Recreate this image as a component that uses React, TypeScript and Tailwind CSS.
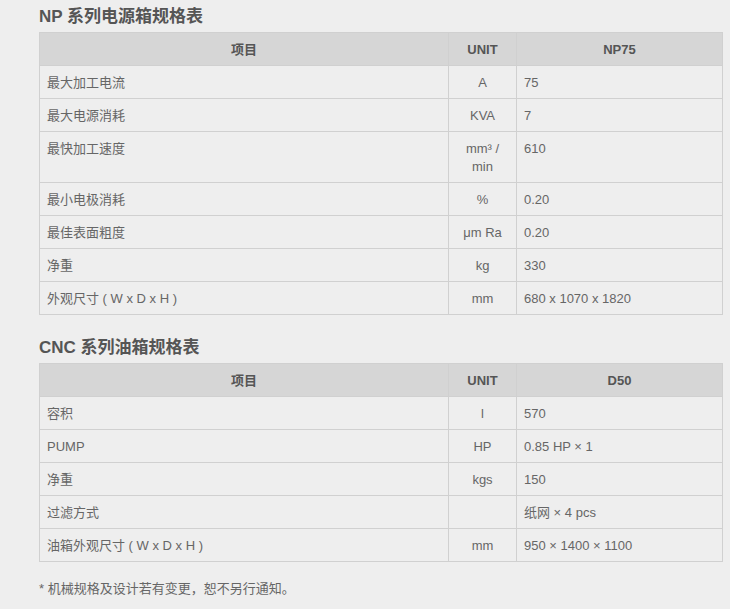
import React from 'react';

type Row = { item: string; unit: React.ReactNode; value: string };

const NP_ROWS: Row[] = [
  { item: '最大加工电流', unit: 'A', value: '75' },
  { item: '最大电源消耗', unit: 'KVA', value: '7' },
  { item: '最快加工速度', unit: <>mm³ /<br />min</>, value: '610' },
  { item: '最小电极消耗', unit: '%', value: '0.20' },
  { item: '最佳表面粗度', unit: 'μm Ra', value: '0.20' },
  { item: '净重', unit: 'kg', value: '330' },
  { item: '外观尺寸 ( W x D x H )', unit: 'mm', value: '680 x 1070 x 1820' },
];

const CNC_ROWS: Row[] = [
  { item: '容积', unit: 'l', value: '570' },
  { item: 'PUMP', unit: 'HP', value: '0.85 HP × 1' },
  { item: '净重', unit: 'kgs', value: '150' },
  { item: '过滤方式', unit: '', value: '纸网 × 4 pcs' },
  { item: '油箱外观尺寸 ( W x D x H )', unit: 'mm', value: '950 × 1400 × 1100' },
];

const thClass = 'border border-[#d0d0d0] bg-[#d6d6d6] pt-[8px] pb-[6px] leading-[18px] font-bold text-center text-[#555]';
const tdClass = 'border border-[#d0d0d0] pt-[8px] pb-[6px] px-[7px] leading-[18px] align-top';

const SpecTable: React.FC<{ model: string; rows: Row[] }> = ({ model, rows }) => (
  <table className="table-fixed border-collapse w-[684px] text-[13px]">
    <colgroup>
      <col className="w-[409px]" />
      <col className="w-[68px]" />
      <col />
    </colgroup>
    <thead>
      <tr>
        <th className={thClass}>项目</th>
        <th className={thClass}>UNIT</th>
        <th className={thClass}>{model}</th>
      </tr>
    </thead>
    <tbody>
      {rows.map((row, i) => (
        <tr key={i}>
          <td className={tdClass}>{row.item}</td>
          <td className={tdClass + ' text-center'}>{row.unit}</td>
          <td className={tdClass}>{row.value}</td>
        </tr>
      ))}
    </tbody>
  </table>
);

export default function App() {
  return (
    <div
      className="min-h-screen bg-[#eeeeee] pl-[39px] pt-[5px] text-[#666]"
      style={{ fontFamily: '"Liberation Sans", "Noto Sans CJK SC", sans-serif' }}
    >
      <h2 className="text-[17px] font-bold leading-6 mb-[3px] text-[#555]">NP 系列电源箱规格表</h2>
      <SpecTable model="NP75" rows={NP_ROWS} />

      <h2 className="text-[17px] font-bold leading-6 mt-[21px] mb-[3px] text-[#555]">CNC 系列油箱规格表</h2>
      <SpecTable model="D50" rows={CNC_ROWS} />

      <p className="mt-[18px] text-[13px] leading-[18px]">* 机械规格及设计若有变更，恕不另行通知。</p>
    </div>
  );
}
